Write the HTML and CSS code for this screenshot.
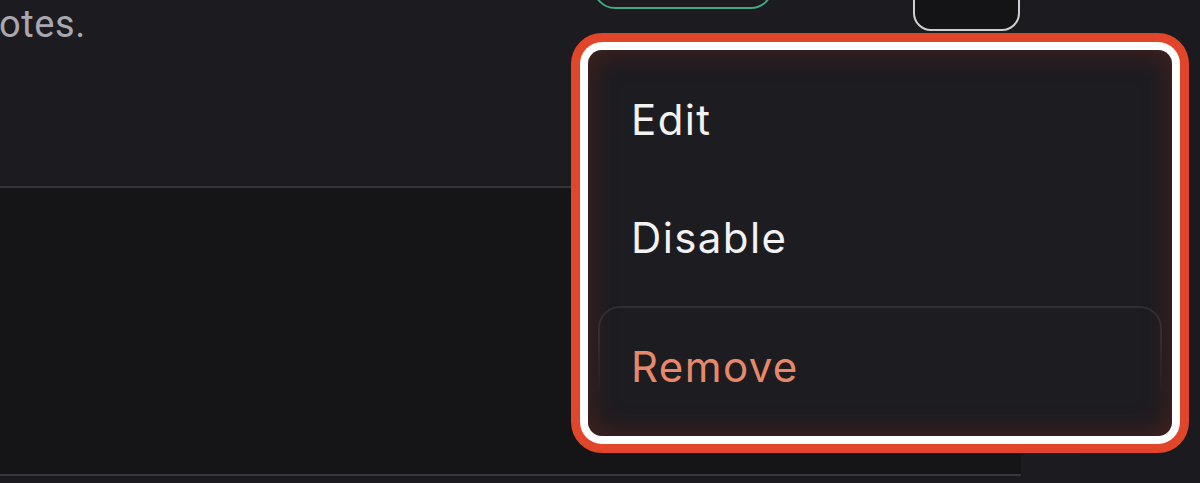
FILE: index.html
```html
<!DOCTYPE html>
<html lang="en">
<head>
    <meta charset="UTF-8"/>
    <title>Notes - row menu</title>
    <link rel="stylesheet" href="styles.css">
</head>
<body>
<div class="page">
    <main class="main-column">
        <section class="card-top">
            <p class="card-text">otes.</p>
            <div class="card-actions">
                <button class="status-pill" type="button"></button>
                <button class="more-button" type="button"></button>
            </div>
        </section>
        <section class="card-bottom"></section>
    </main>
    <aside class="side-column"></aside>

    <!-- Row context menu (open) -->
    <div class="row-menu">
        <button class="menu-item">Edit</button>
        <button class="menu-item">Disable</button>
        <div class="menu-danger">
            <button class="menu-item danger">Remove</button>
        </div>
    </div>
</div>
</body>
</html>
```

FILE: styles.css
```css
/* Base */
body {
    margin: 0;
    background-color: #1c1b20;
    font-family: "Inter", "Roboto", sans-serif;
    overflow: hidden;
}

.page {
    position: relative;
    display: grid;
    grid-template-columns: 1080px 120px;
    width: 1200px;
    height: 483px;
}

/* Main column */
.main-column {
    display: flex;
    flex-direction: column;
}

.card-top {
    height: 186px;
    display: flex;
    justify-content: space-between;
    align-items: flex-start;
    border-bottom: 2px solid #36353b;
    background-color: #1c1b20;
}

.card-text {
    margin: 3px 0 0 -1px;
    font-family: "Roboto", sans-serif;
    font-size: 38px;
    line-height: 42px;
    letter-spacing: 0.6px;
    color: #a9a8b0;
}

.card-actions {
    display: flex;
    align-items: flex-start;
    gap: 140px;
    margin-top: -40px;
    margin-right: 60px;
}

.status-pill {
    width: 180px;
    height: 49px;
    border: 2px solid #3fa97f;
    border-radius: 22px;
    background: transparent;
}

.more-button {
    width: 107px;
    height: 71px;
    border: 2px solid #cfcfd2;
    border-radius: 18px;
    background-color: #141316;
}

.card-bottom {
    height: 286px;
    background-color: #151417;
    border-bottom: 2px solid #38373d;
    margin-right: 59px;
}

.side-column {
    background-color: #1b1a1e;
}

/* Context menu */
.row-menu {
    position: absolute;
    top: 50px;
    left: 588px;
    width: 584px;
    height: 386px;
    box-sizing: border-box;
    padding: 10px 10px 8px;
    display: flex;
    flex-direction: column;
    border-radius: 14px;
    background-color: #1d1c21;
    box-shadow: inset 0 0 28px rgba(125, 40, 26, 0.5),
                0 0 0 8px #ffffff,
                0 0 0 17px #e1462a;
}

.menu-item {
    display: block;
    width: 100%;
    height: 118px;
    padding: 0 0 0 33px;
    border: none;
    background: transparent;
    text-align: left;
    font-family: "Inter", sans-serif;
    font-size: 42px;
    letter-spacing: 1.4px;
    color: #f2f2f3;
    cursor: pointer;
}

.menu-danger {
    position: relative;
    margin-top: 10px;
}

/* border that fades out towards the bottom */
.menu-danger::before {
    content: "";
    position: absolute;
    inset: 0;
    border: 2px solid rgba(255, 255, 255, 0.09);
    border-radius: 22px;
    -webkit-mask-image: linear-gradient(to bottom, #000 15%, transparent 75%);
    mask-image: linear-gradient(to bottom, #000 15%, transparent 75%);
    pointer-events: none;
}

.menu-item.danger {
    height: 120px;
    color: #e8886b;
}
```
